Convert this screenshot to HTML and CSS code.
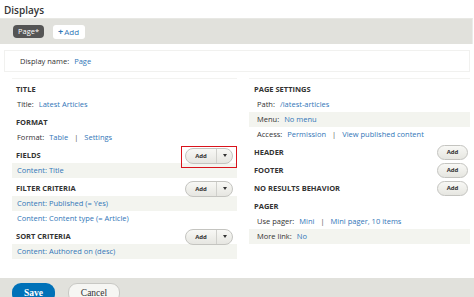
FILE: index.html
```html
<!DOCTYPE html>
<html>
<head>
<meta charset="utf-8">
<link rel="stylesheet" href="styles.css">
</head>
<body>
<h1 class="page-title">Displays</h1>
<div class="tabs">
  <span class="tab-active">Page*</span>
  <span class="tab-add"><span class="plus">+</span>Add</span>
</div>
<div class="main">
  <div class="display-name"><span class="label">Display name:</span><a>Page</a></div>
  <div class="columns">
    <div class="column">
      <div class="section-head"><span>TITLE</span></div>
      <div class="detail"><span class="label">Title:</span><a>Latest Articles</a></div>
      <div class="section-head"><span>FORMAT</span></div>
      <div class="detail"><span class="label">Format:</span><a>Table</a><span class="sep">|</span><a>Settings</a></div>
      <div class="section-head"><span>FIELDS</span>
        <span class="split highlighted"><span class="split-main">Add</span><span class="split-arrow"><i class="caret"></i></span></span>
      </div>
      <div class="detail odd"><a>Content: Title</a></div>
      <div class="section-head"><span>FILTER CRITERIA</span>
        <span class="split"><span class="split-main">Add</span><span class="split-arrow"><i class="caret"></i></span></span>
      </div>
      <div class="detail odd"><a>Content: Published (= Yes)</a></div>
      <div class="detail"><a>Content: Content type (= Article)</a></div>
      <div class="section-head"><span>SORT CRITERIA</span>
        <span class="split"><span class="split-main">Add</span><span class="split-arrow"><i class="caret"></i></span></span>
      </div>
      <div class="detail odd"><a>Content: Authored on (desc)</a></div>
    </div>
    <div class="column">
      <div class="section-head"><span>PAGE SETTINGS</span></div>
      <div class="detail"><span class="label">Path:</span><a>/latest-articles</a></div>
      <div class="detail odd"><span class="label">Menu:</span><a>No menu</a></div>
      <div class="detail"><span class="label">Access:</span><a>Permission</a><span class="sep">|</span><a>View published content</a></div>
      <div class="section-head"><span>HEADER</span><span class="btn-add">Add</span></div>
      <div class="section-head"><span>FOOTER</span><span class="btn-add">Add</span></div>
      <div class="section-head"><span>NO RESULTS BEHAVIOR</span><span class="btn-add">Add</span></div>
      <div class="section-head"><span>PAGER</span></div>
      <div class="detail"><span class="label">Use pager:</span><a>Mini</a><span class="sep">|</span><a>Mini pager, 10 items</a></div>
      <div class="detail odd"><span class="label">More link:</span><a>No</a></div>
    </div>
  </div>
</div>
<div class="actions">
  <span class="btn-save">Save</span>
  <span class="btn-cancel">Cancel</span>
</div>
</body>
</html>
```
FILE: styles.css
```css
html, body {
  margin: 0;
  padding: 0;
  background: #fff;
}
body {
  width: 474px;
  height: 297px;
  overflow: hidden;
  font-family: "Open Sans", "DejaVu Sans", sans-serif;
  color: #333;
  font-size: 7.5px;
}
a {
  color: #3276b8;
  text-decoration: none;
}
.label {
  margin-right: 5px;
}
.page-title {
  margin: 0;
  height: 18px;
  box-sizing: border-box;
  padding: 3px 0 0 4px;
  font-size: 10px;
  line-height: 15px;
  font-weight: 600;
  color: #333;
}
.tabs {
  height: 26px;
  box-sizing: border-box;
  width: 473px;
  background: #e1e1dc;
  border-top: 1px solid #e8e8e4;
  border-right: 1px solid #ececea;
  display: flex;
  align-items: center;
  padding-left: 13px;
  gap: 9px;
}
.tab-active {
  height: 13px;
  line-height: 13px;
  padding: 0 5px;
  background: #555;
  color: #fff;
  border-radius: 4px;
  font-size: 7.5px;
}
.tab-add {
  height: 14px;
  line-height: 14px;
  padding: 0 6px 0 5px;
  background: #fff;
  color: #2f74b5;
  border-radius: 3px;
  font-size: 8px;
}
.plus {
  font-weight: 700;
  font-size: 9px;
  margin-right: 1px;
}
.main {
  height: 234px;
  box-sizing: border-box;
  padding: 6px 4px 0 4px;
}
.display-name {
  height: 22px;
  box-sizing: border-box;
  border: 1px solid #f1f1ef;
  padding-left: 15px;
  line-height: 20px;
}
.columns {
  display: grid;
  grid-template-columns: 225px 221px;
  column-gap: 12px;
  padding-left: 8px;
  margin-top: 6px;
}
.column {
  border-top: 1px solid #f3f3f1;
}
.section-head {
  height: 18px;
  box-sizing: border-box;
  padding: 3px 3px 0 4px;
  display: flex;
  align-items: center;
  justify-content: space-between;
  font-weight: 700;
  font-size: 7.5px;
}
.column + .column .section-head {
  padding-left: 5px;
  padding-right: 2px;
}
.section-head > span:first-child {
  line-height: 15px;
}
.detail {
  height: 15px;
  line-height: 15px;
  padding-left: 5px;
}
.column + .column .detail {
  padding-left: 8px;
}
.detail.odd {
  background: #f3f4ef;
}
.sep {
  margin: 0 6px;
  color: #555;
}
.split {
  position: relative;
  display: flex;
  height: 16px;
  box-sizing: border-box;
  border: 1px solid #c4c4c0;
  border-radius: 8px;
  background: linear-gradient(#f8f8f5, #e6e6e1);
  margin-right: 1px;
}
.split-main {
  width: 30px;
  text-align: center;
  line-height: 14px;
  font-size: 6px;
  font-weight: 700;
  color: #333;
}
.split-arrow {
  width: 15px;
  border-left: 1px solid #d0d0cc;
  display: flex;
  align-items: center;
  justify-content: center;
}
.caret {
  width: 0;
  height: 0;
  border-left: 2.5px solid transparent;
  border-right: 2.5px solid transparent;
  border-top: 3px solid #333;
}
.highlighted::after {
  content: "";
  position: absolute;
  left: -5px;
  right: -5px;
  top: -3px;
  bottom: -5px;
  border: 1px solid #d9131b;
}
.btn-add {
  width: 31px;
  height: 15px;
  box-sizing: border-box;
  border: 1px solid #c4c4c0;
  border-radius: 8px;
  background: linear-gradient(#f8f8f5, #e6e6e1);
  text-align: center;
  line-height: 13px;
  font-size: 6px;
  font-weight: 700;
  color: #333;
}
.actions {
  background: #e1e1dc;
  display: flex;
  align-items: flex-start;
  padding: 5px 0 0 12px;
  gap: 13px;
  box-sizing: border-box;
  height: 19px;
}
.btn-save {
  width: 43px;
  height: 20px;
  background: #0071b8;
  border-radius: 9px;
  color: #fff;
  text-align: center;
  line-height: 20px;
  font-size: 9.5px;
  font-weight: 700;
  font-family: "Liberation Serif", serif;
}
.btn-cancel {
  width: 52px;
  height: 20px;
  box-sizing: border-box;
  border: 1px solid #c8c8c4;
  background: #f6f6f3;
  border-radius: 9px;
  color: #333;
  text-align: center;
  line-height: 19px;
  font-size: 9.5px;
  font-family: "Liberation Serif", serif;
}
```
